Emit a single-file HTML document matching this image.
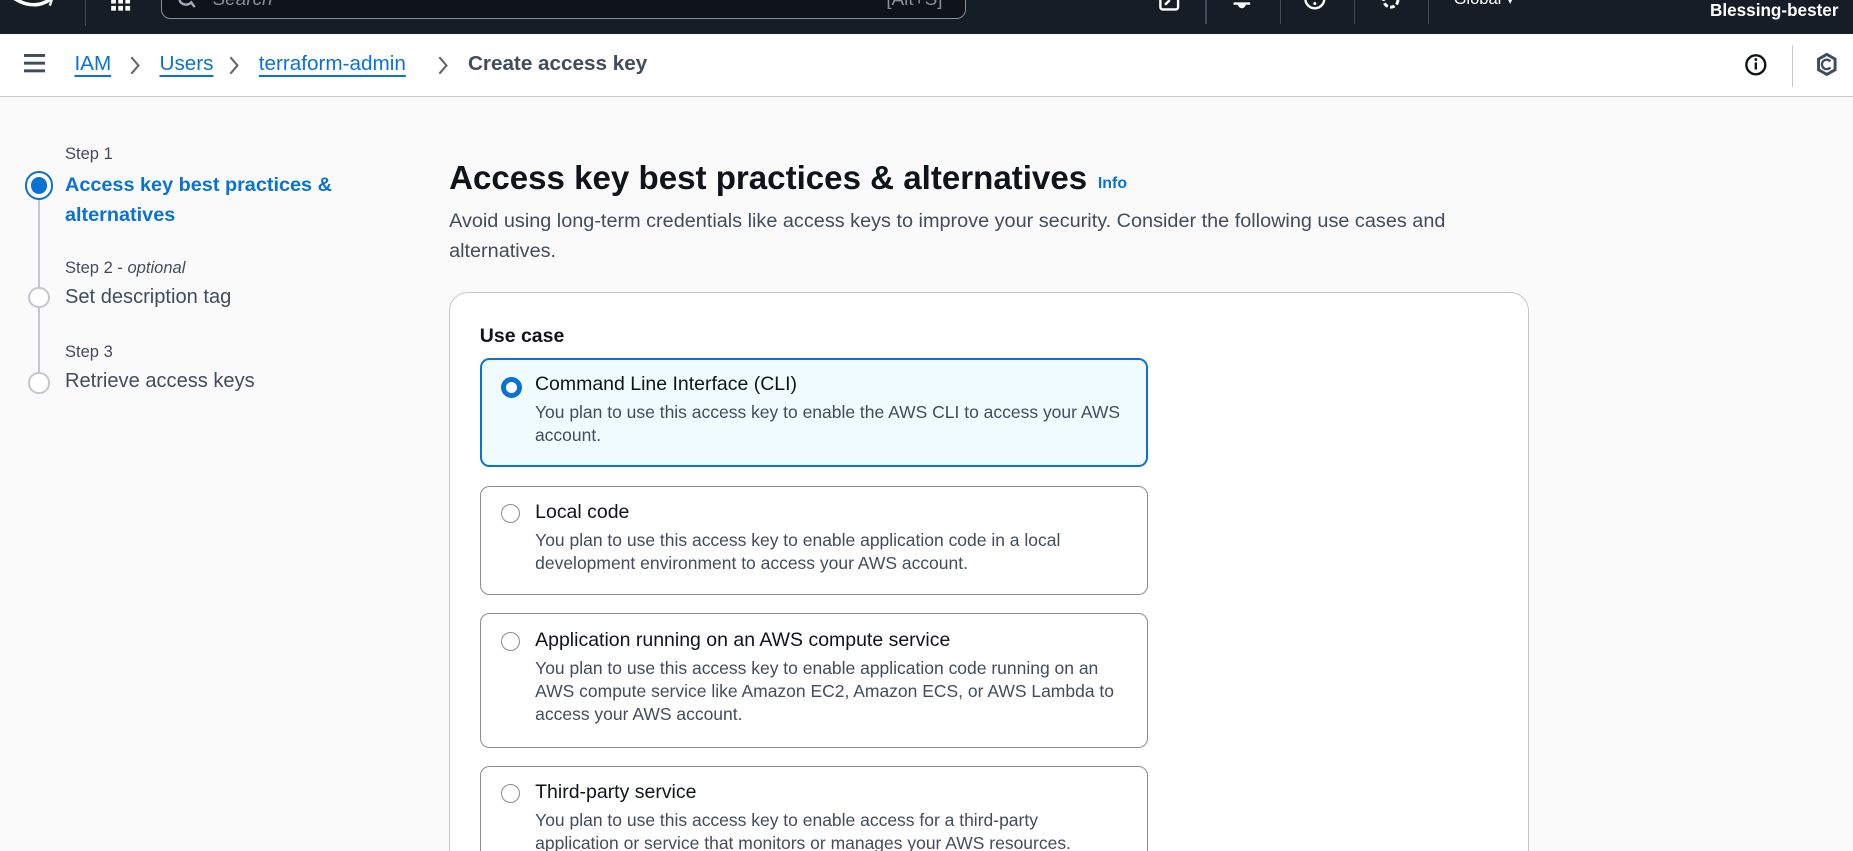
<!DOCTYPE html>
<html><head><meta charset="utf-8"><style>
html,body{margin:0;padding:0;overflow:hidden;width:1853px;height:851px;background:#fafafa}
#w{zoom:1.18176;width:1568px;height:720px;position:relative;font-family:"Liberation Sans",sans-serif;color:#0f141a;overflow:hidden}
.a{position:absolute;white-space:nowrap}
.top{position:absolute;left:0;top:0;width:1568px;height:29px;background:#161d26}
.vd{position:absolute;top:0;width:1px;height:20px;background:#414d5c}
.bc{position:absolute;left:0;top:29px;width:1568px;height:52px;background:#fff;border-bottom:1px solid #c6c6cd}
.lnk{color:#0972d3;text-decoration:underline;text-underline-offset:4px;font-size:17.5px}
.step{font-size:14px;color:#414d5c}
.nav{font-size:17px;color:#414d5c}
.card{position:absolute;left:380px;top:247px;width:912px;height:520px;background:#fff;border:1px solid #c6c6cd;border-radius:16px}
.tile{position:absolute;left:406px;width:564px;border:1px solid #8c8c94;border-radius:8px;background:#fff}
.tile.sel{border:2px solid #0972d3;background:#f0fbff;width:562px}
.rad{position:absolute;left:17px;top:15px;width:16px;height:16px;border:1.5px solid #8c8c94;border-radius:50%;box-sizing:border-box;background:#fff}
.sel .rad{border:5px solid #0972d3;left:16px;top:14px;width:18px;height:18px}
.tt{position:absolute;left:46px;top:12px;font-size:16.5px;white-space:nowrap}
.sel .tt{left:45px;top:11px}
.ds{position:absolute;left:46px;top:36px;font-size:14.8px;line-height:19.5px;color:#414d5c;width:500px}
.sel .ds{left:45px;top:35px}
</style></head><body><div id="w">
<div class="top">
  <svg class="a" style="left:10px;top:-4px" width="36" height="14"><path d="M2 3 Q18 13 32 4" stroke="#fff" stroke-width="3" fill="none"/><path d="M28 2 L34 3 L32 9" stroke="#fff" stroke-width="2" fill="none"/></svg>
  <div class="vd" style="left:72px;top:0;height:22px"></div>
  <svg class="a" style="left:93px;top:0" width="20" height="10"><g fill="#fff"><rect x="1" y="0" width="4" height="3"/><rect x="7" y="0" width="4" height="3"/><rect x="13" y="0" width="4" height="3"/><rect x="1" y="5" width="4" height="4"/><rect x="7" y="5" width="4" height="4"/><rect x="13" y="5" width="4" height="4"/></g></svg>
  <div class="a" style="left:136px;top:-12px;width:680px;height:26px;border:1.5px solid #8c8c94;border-radius:8px;background:#0f141a"></div>
  <svg class="a" style="left:150px;top:0" width="16" height="8"><path d="M2 0 A6 6 0 0 0 12 2 L15 6" stroke="#aab" stroke-width="2" fill="none"/></svg>
  <div class="a" style="left:180px;top:-9px;font-size:16px;color:#8c8c94;font-style:italic">Search</div>
  <div class="a" style="left:750px;top:-9px;font-size:16px;color:#8c8c94">[Alt+S]</div>
  <svg class="a" style="left:980px;top:0" width="20" height="10"><rect x="2" y="-6" width="15" height="14" rx="2" stroke="#fff" stroke-width="2" fill="none"/><path d="M6 4 L10 0" stroke="#fff" stroke-width="2"/></svg>
  <div class="vd" style="left:1020px"></div>
  <svg class="a" style="left:1041px;top:0" width="20" height="10"><path d="M3 3 L17 3 M7 3 Q10 9 13 3" stroke="#fff" stroke-width="2" fill="#fff"/></svg>
  <div class="vd" style="left:1083px"></div>
  <svg class="a" style="left:1103px;top:0" width="20" height="12"><circle cx="10" cy="-1" r="8" stroke="#fff" stroke-width="2" fill="none"/><circle cx="10" cy="3" r="1.3" fill="#fff"/></svg>
  <div class="vd" style="left:1146px"></div>
  <svg class="a" style="left:1167px;top:0" width="20" height="12"><circle cx="10" cy="0" r="6" stroke="#fff" stroke-width="2.5" fill="none" stroke-dasharray="4 2"/></svg>
  <div class="vd" style="left:1208px"></div>
  <div class="a" style="left:1230px;top:-9px;font-size:14px;color:#fff">Global ▾</div>
  <div class="a" style="left:1447px;top:0px;font-size:14.5px;color:#fff;font-weight:bold">Blessing-bester</div>
</div>
<div class="bc">
  <svg class="a" style="left:20px;top:17px" width="18" height="16"><g fill="#414d5c"><rect y="0" width="18" height="2.5"/><rect y="6.5" width="18" height="2.5"/><rect y="13" width="18" height="2.5"/></g></svg>
  <div class="a lnk" style="left:63px;top:15px">IAM</div>
  <svg class="a" style="left:109px;top:18px" width="10" height="16"><path d="M2 1 L8 8 L2 15" stroke="#656871" stroke-width="1.8" fill="none"/></svg>
  <div class="a lnk" style="left:135px;top:15px">Users</div>
  <svg class="a" style="left:193px;top:18px" width="10" height="16"><path d="M2 1 L8 8 L2 15" stroke="#656871" stroke-width="1.8" fill="none"/></svg>
  <div class="a lnk" style="left:219px;top:15px">terraform-admin</div>
  <svg class="a" style="left:370px;top:18px" width="10" height="16"><path d="M2 1 L8 8 L2 15" stroke="#656871" stroke-width="1.8" fill="none"/></svg>
  <div class="a" style="left:396px;top:15px;font-size:17.5px;font-weight:bold;color:#414d5c">Create access key</div>
  <svg class="a" style="left:1476px;top:16px" width="20" height="20"><circle cx="10" cy="10" r="8" stroke="#0f141a" stroke-width="2" fill="none"/><rect x="9" y="8" width="2" height="6" fill="#0f141a"/><circle cx="10" cy="5.5" r="1.2" fill="#0f141a"/></svg>
  <div class="a" style="left:1516px;top:9px;width:1px;height:36px;background:#c6c6cd"></div>
  <svg class="a" style="left:1536px;top:15px" width="20" height="22"><path d="M10 2 L17 6 L17 15 L10 19 L3 15 L3 6 Z" stroke="#414d5c" stroke-width="2.5" fill="none"/><path d="M13 8 A4 4 0 1 0 13 13" stroke="#414d5c" stroke-width="2" fill="none"/></svg>
</div>

<div class="a" style="left:32px;top:166px;width:2px;height:164px;background:#c6c6cd"></div>
<div class="a" style="left:21px;top:145px;width:24px;height:24px;border-radius:50%;border:2.5px solid #0972d3;box-sizing:border-box;background:#fff"></div>
<div class="a" style="left:26px;top:150px;width:14px;height:14px;border-radius:50%;background:#0972d3"></div>
<div class="a" style="left:24px;top:243px;width:18px;height:18px;border-radius:50%;border:2px solid #c6c6cd;box-sizing:border-box;background:#fff"></div>
<div class="a" style="left:24px;top:315px;width:18px;height:18px;border-radius:50%;border:2px solid #c6c6cd;box-sizing:border-box;background:#fff"></div>
<div class="a step" style="left:55px;top:122px">Step 1</div>
<div class="a" style="left:55px;top:145px;font-size:16.8px;font-weight:bold;color:#0972d3;line-height:25px">Access key best practices &amp;<br>alternatives</div>
<div class="a step" style="left:55px;top:218px">Step 2 - <i>optional</i></div>
<div class="a nav" style="left:55px;top:242px">Set description tag</div>
<div class="a step" style="left:55px;top:289px">Step 3</div>
<div class="a nav" style="left:55px;top:313px">Retrieve access keys</div>

<div class="a" style="left:380px;top:135px;font-size:28px;font-weight:bold">Access key best practices &amp; alternatives</div>
<div class="a" style="left:929px;top:148px;font-size:13.5px;font-weight:bold;color:#0972d3">Info</div>
<div class="a" style="left:380px;top:174px;font-size:16.8px;line-height:26px;color:#414d5c;white-space:normal;width:915px">Avoid using long-term credentials like access keys to improve your security. Consider the following use cases and alternatives.</div>

<div class="card"></div>
<div class="a" style="left:406px;top:275px;font-size:16.5px;font-weight:bold">Use case</div>
<div class="tile sel" style="top:303px;height:89px"><div class="rad"></div><div class="tt">Command Line Interface (CLI)</div><div class="ds">You plan to use this access key to enable the AWS CLI to access your AWS account.</div></div>
<div class="tile" style="top:411px;height:91px"><div class="rad"></div><div class="tt">Local code</div><div class="ds">You plan to use this access key to enable application code in a local development environment to access your AWS account.</div></div>
<div class="tile" style="top:519px;height:112px"><div class="rad"></div><div class="tt">Application running on an AWS compute service</div><div class="ds">You plan to use this access key to enable application code running on an AWS compute service like Amazon EC2, Amazon ECS, or AWS Lambda to access your AWS account.</div></div>
<div class="tile" style="top:648px;height:110px"><div class="rad"></div><div class="tt">Third-party service</div><div class="ds">You plan to use this access key to enable access for a third-party application or service that monitors or manages your AWS resources.</div></div>
</div></body></html>
